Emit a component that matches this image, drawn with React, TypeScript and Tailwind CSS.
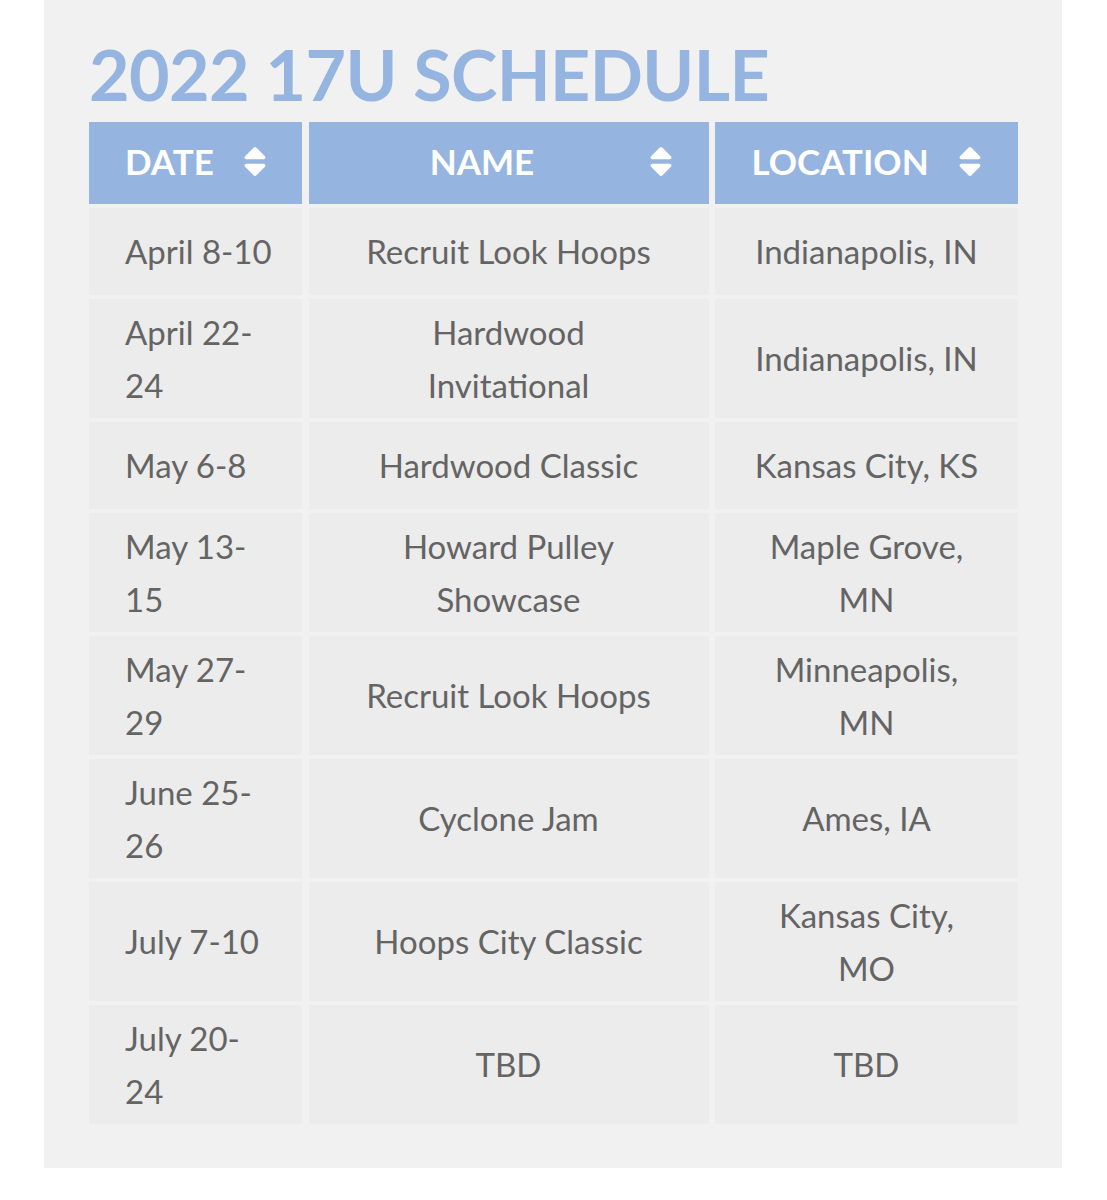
import React from 'react';

type Row = { date: string[]; name: string[]; location: string[] };

const rows: Row[] = [
  { date: ['April 8-10'], name: ['Recruit Look Hoops'], location: ['Indianapolis, IN'] },
  { date: ['April 22-', '24'], name: ['Hardwood', 'Invitational'], location: ['Indianapolis, IN'] },
  { date: ['May 6-8'], name: ['Hardwood Classic'], location: ['Kansas City, KS'] },
  { date: ['May 13-', '15'], name: ['Howard Pulley', 'Showcase'], location: ['Maple Grove,', 'MN'] },
  { date: ['May 27-', '29'], name: ['Recruit Look Hoops'], location: ['Minneapolis,', 'MN'] },
  { date: ['June 25-', '26'], name: ['Cyclone Jam'], location: ['Ames, IA'] },
  { date: ['July 7-10'], name: ['Hoops City Classic'], location: ['Kansas City,', 'MO'] },
  { date: ['July 20-', '24'], name: ['TBD'], location: ['TBD'] },
];

const SortIcon = () => (
  <svg viewBox="10 57 300 398" className="w-[22px] h-[29px] shrink-0" fill="#ffffff">
    <path d="M41 288h238c21.4 0 32.1 25.9 17 41L177 448c-9.4 9.4-24.6 9.4-33.9 0L24 329c-15.1-15.1-4.4-41 17-41zm255-105L177 64c-9.4-9.4-24.6-9.4-33.9 0L24 183c-15.1 15.1-4.4 41 17 41h238c21.4 0 32.1-25.9 17-41z" />
  </svg>
);

const HeaderCell = ({ label, center }: { label: string; center?: boolean }) => (
  <div className="h-[82px] bg-[#95b5e0] flex items-center pl-9 pr-[37px] pb-[4px] gap-[30px]">
    <div className={`flex-1 text-white font-bold text-[35px] leading-none ${center ? 'text-center' : 'text-left'}`}>
      {label}
    </div>
    <SortIcon />
  </div>
);

const Cell = ({ lines, center }: { lines: string[]; center?: boolean }) => (
  <div
    className={`min-h-[87px] bg-[#ececec] flex flex-col justify-center py-[6.5px] text-[33px] leading-[53px] text-[#646464] ${
      center ? 'items-center text-center px-4' : 'items-start pl-9 pr-4'
    }`}
  >
    {lines.map((l, i) => (
      <span key={i} className="whitespace-nowrap">{l}</span>
    ))}
  </div>
);

export default function App() {
  return (
    <div className="bg-white min-h-[1200px]" style={{ fontFamily: 'Lato, "Noto Sans", sans-serif' }}>
      <div className="ml-[44px] w-[1018px] h-[1168px] bg-[#f1f1f1] px-[45px] pt-[39px]">
        <h1 className="text-[70px] leading-none font-bold tracking-[-0.6px] text-[#95b5e0] mb-[13px]">2022 17U SCHEDULE</h1>
        <div className="grid grid-cols-[213px_400px_303px] gap-x-[6.5px] gap-y-[4px]">
          <HeaderCell label="DATE" />
          <HeaderCell label="NAME" center />
          <HeaderCell label="LOCATION" center />
          {rows.map((r, i) => (
            <React.Fragment key={i}>
              <Cell lines={r.date} />
              <Cell lines={r.name} center />
              <Cell lines={r.location} center />
            </React.Fragment>
          ))}
        </div>
      </div>
    </div>
  );
}
